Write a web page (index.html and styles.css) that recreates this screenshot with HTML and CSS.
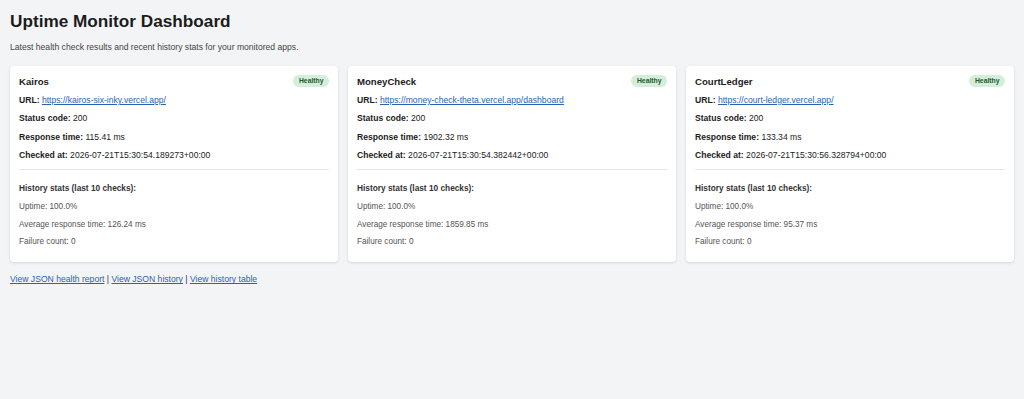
FILE: index.html
```html
<!DOCTYPE html>
<html lang="en">
<head>
  <meta charset="UTF-8" />
  <meta name="viewport" content="width=device-width, initial-scale=1.0"/>
  <title>Uptime Monitor Dashboard</title>
  <link rel="stylesheet" href="styles.css">
</head>
<body>
  <h1 class="titulo">Uptime Monitor Dashboard</h1>
  <p class="subtitulo">Latest health check results and recent history stats for your monitored apps.</p>

  <div class="tarjetas">
    <div class="tarjeta">
      <div class="cabecera"><span class="nombre">Kairos</span><span class="estado">Healthy</span></div>
      <p class="dato"><strong>URL:</strong> <a href="#">https://kairos-six-inky.vercel.app/</a></p>
      <p class="dato"><strong>Status code:</strong> 200</p>
      <p class="dato"><strong>Response time:</strong> 115.41 ms</p>
      <p class="dato"><strong>Checked at:</strong> 2026-07-21T15:30:54.189273+00:00</p>
      <hr class="separador">
      <p class="historial-titulo">History stats (last 10 checks):</p>
      <p class="historial">Uptime: 100.0%</p>
      <p class="historial">Average response time: 126.24 ms</p>
      <p class="historial">Failure count: 0</p>
    </div>

    <div class="tarjeta">
      <div class="cabecera"><span class="nombre">MoneyCheck</span><span class="estado">Healthy</span></div>
      <p class="dato"><strong>URL:</strong> <a href="#">https://money-check-theta.vercel.app/dashboard</a></p>
      <p class="dato"><strong>Status code:</strong> 200</p>
      <p class="dato"><strong>Response time:</strong> 1902.32 ms</p>
      <p class="dato"><strong>Checked at:</strong> 2026-07-21T15:30:54.382442+00:00</p>
      <hr class="separador">
      <p class="historial-titulo">History stats (last 10 checks):</p>
      <p class="historial">Uptime: 100.0%</p>
      <p class="historial">Average response time: 1859.85 ms</p>
      <p class="historial">Failure count: 0</p>
    </div>

    <div class="tarjeta">
      <div class="cabecera"><span class="nombre">CourtLedger</span><span class="estado">Healthy</span></div>
      <p class="dato"><strong>URL:</strong> <a href="#">https://court-ledger.vercel.app/</a></p>
      <p class="dato"><strong>Status code:</strong> 200</p>
      <p class="dato"><strong>Response time:</strong> 133.34 ms</p>
      <p class="dato"><strong>Checked at:</strong> 2026-07-21T15:30:56.328794+00:00</p>
      <hr class="separador">
      <p class="historial-titulo">History stats (last 10 checks):</p>
      <p class="historial">Uptime: 100.0%</p>
      <p class="historial">Average response time: 95.37 ms</p>
      <p class="historial">Failure count: 0</p>
    </div>
  </div>

  <p class="enlaces">
    <a href="#">View JSON health report</a> | <a href="#">View JSON history</a> | <a href="#">View history table</a>
  </p>
</body>
</html>
```

FILE: styles.css
```css
body {
  font-family: 'Liberation Sans', Arial, sans-serif;
  background: #f3f4f6;
  margin: 0;
  padding: 10px;
  color: #222222;
}

a {
  color: #2a62b5;
}

.titulo {
  font-size: 17.2px;
  line-height: 22px;
  font-weight: 700;
  margin: 0;
  color: #1c1c1c;
}

.subtitulo {
  font-size: 8.6px;
  line-height: 11px;
  margin: 10px 0 0 0;
  color: #444444;
}

.tarjetas {
  display: grid;
  grid-template-columns: repeat(3, 1fr);
  gap: 10px;
  margin-top: 13px;
}

.tarjeta {
  background: #ffffff;
  border-radius: 4px;
  box-shadow: 0 1px 3px rgba(0, 0, 0, 0.12);
  padding: 8px 9px 14.5px 9px;
}

.cabecera {
  display: flex;
  justify-content: space-between;
  align-items: center;
  height: 14px;
  margin-bottom: 7px;
}

.nombre {
  font-size: 9.6px;
  font-weight: 700;
  color: #1c1c1c;
}

.estado {
  background: #d5eedb;
  color: #1d5a2c;
  font-size: 6.8px;
  font-weight: 700;
  line-height: 12px;
  padding: 0 5.5px;
  border-radius: 6px;
}

.dato {
  font-size: 8.6px;
  line-height: 11px;
  margin: 0 0 7.33px 0;
}

.dato strong {
  color: #1c1c1c;
}

.separador {
  border: none;
  border-top: 1px solid #e6e6e6;
  margin: 8px 0 13px 0;
}

.historial-titulo {
  font-size: 8.3px;
  font-weight: 700;
  line-height: 11px;
  margin: 0 0 7px 0;
  color: #333333;
}

.historial {
  font-size: 8.2px;
  line-height: 11px;
  margin: 0 0 6.7px 0;
  color: #555555;
}

.historial:last-child {
  margin-bottom: 0;
}

.enlaces {
  font-size: 8.6px;
  line-height: 11px;
  margin: 12.5px 0 0 0;
  color: #333333;
}
```
